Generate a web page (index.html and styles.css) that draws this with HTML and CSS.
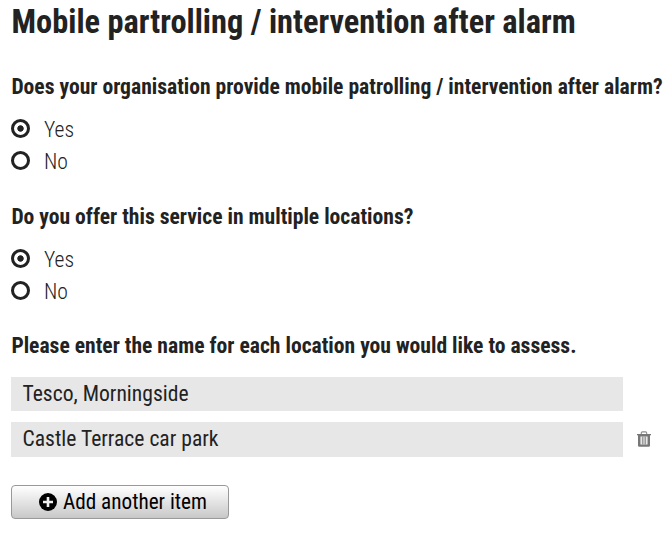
FILE: index.html
```html
<!DOCTYPE html>
<html lang="en">
<head>
<meta charset="utf-8">
<title>Mobile patrolling</title>
<link rel="stylesheet" href="styles.css">
</head>
<body>
<form class="page">
  <h1 class="title">Mobile partrolling / intervention after alarm</h1>
  <section class="question">
    <h2 class="label">Does your organisation provide mobile patrolling / intervention after alarm?</h2>
    <label class="option"><input class="radio" type="radio" name="mobile" checked>Yes</label>
    <label class="option"><input class="radio" type="radio" name="mobile">No</label>
  </section>
  <section class="question">
    <h2 class="label">Do you offer this service in multiple locations?</h2>
    <label class="option"><input class="radio" type="radio" name="multiple" checked>Yes</label>
    <label class="option"><input class="radio" type="radio" name="multiple">No</label>
  </section>
  <section class="question">
    <h2 class="label">Please enter the name for each location you would like to assess.</h2>
    <div class="row first"><div class="field">Tesco, Morningside</div></div>
    <div class="row"><div class="field">Castle Terrace car park</div>
      <svg class="trash" viewBox="0 0 14 16"><path d="M4.300 3V2q0-1.100 1.100-1.100h3.200q1.100 0 1.100 1.100v1" fill="none" stroke="#8c8c8c" stroke-width="1.100"/><path d="M0 3h14v1.300H0z" fill="#777"/><path fill-rule="evenodd" d="M1 4h12v10.500q0 1.300-1.300 1.300H2.300Q1 15.800 1 14.500zM3.500 5.500v8h7v-8z" fill="#777"/><path d="M5.300 5.500v8M7 5.500v8M8.700 5.500v8" stroke="#777" stroke-width=".9"/></svg>
    </div>
  </section>
  <button class="add" type="button"><svg class="plus" viewBox="0 0 18 18"><circle cx="9" cy="9" r="9"/><path d="M9 4v10M4 9h10" stroke="#f0f0f0" stroke-width="2.600"/></svg>Add another item</button>
</form>
</body>
</html>
```
FILE: styles.css
```css
* { box-sizing: border-box; }
body {
  margin: 0;
  background: #fff;
  color: #222;
  font: 400 21.6px/26px "Roboto Condensed", Roboto, sans-serif;
  font-stretch: 75%;
}
.page { padding-left: 11px; white-space: nowrap; }
.title { margin: 0; padding-left: .5px; font-size: 32.4px; line-height: 45px; font-weight: 700; }
.question { padding-top: 25px; }
.title + .question { padding-top: 29px; }
.label { margin: 0 0 14px; padding-left: .4px; font-size: 21.6px; line-height: 26px; font-weight: 700; }
.option { display: flex; align-items: center; height: 32.3px; font-weight: 300; }
.radio {
  appearance: none;
  width: 19px;
  height: 19px;
  margin: 0 14px 3px 0;
  border: 3px solid #222;
  border-radius: 50%;
}
.radio:checked { background: radial-gradient(circle, #222 2.8px, transparent 3.6px); }
.row { display: flex; align-items: center; margin-top: 11px; }
.row.first { margin-top: 18px; }
.field { width: 612px; height: 34.3px; padding-left: 11.5px; line-height: 34px; background: #e7e7e7; }
.trash { width: 14px; height: 16px; margin: 0 0 2px 14px; }
.add {
  display: flex;
  align-items: center;
  width: 218px;
  height: 34px;
  margin-top: 28px;
  padding: 0 0 0 27px;
  border: 1px solid #999;
  border-radius: 4px;
  background: linear-gradient(#fff, #c8c8c8);
  color: #000;
  font: inherit;
  font-size: 21.2px;
  font-stretch: 75%;
}
.plus { width: 18px; height: 18px; margin-right: 6px; }
```
